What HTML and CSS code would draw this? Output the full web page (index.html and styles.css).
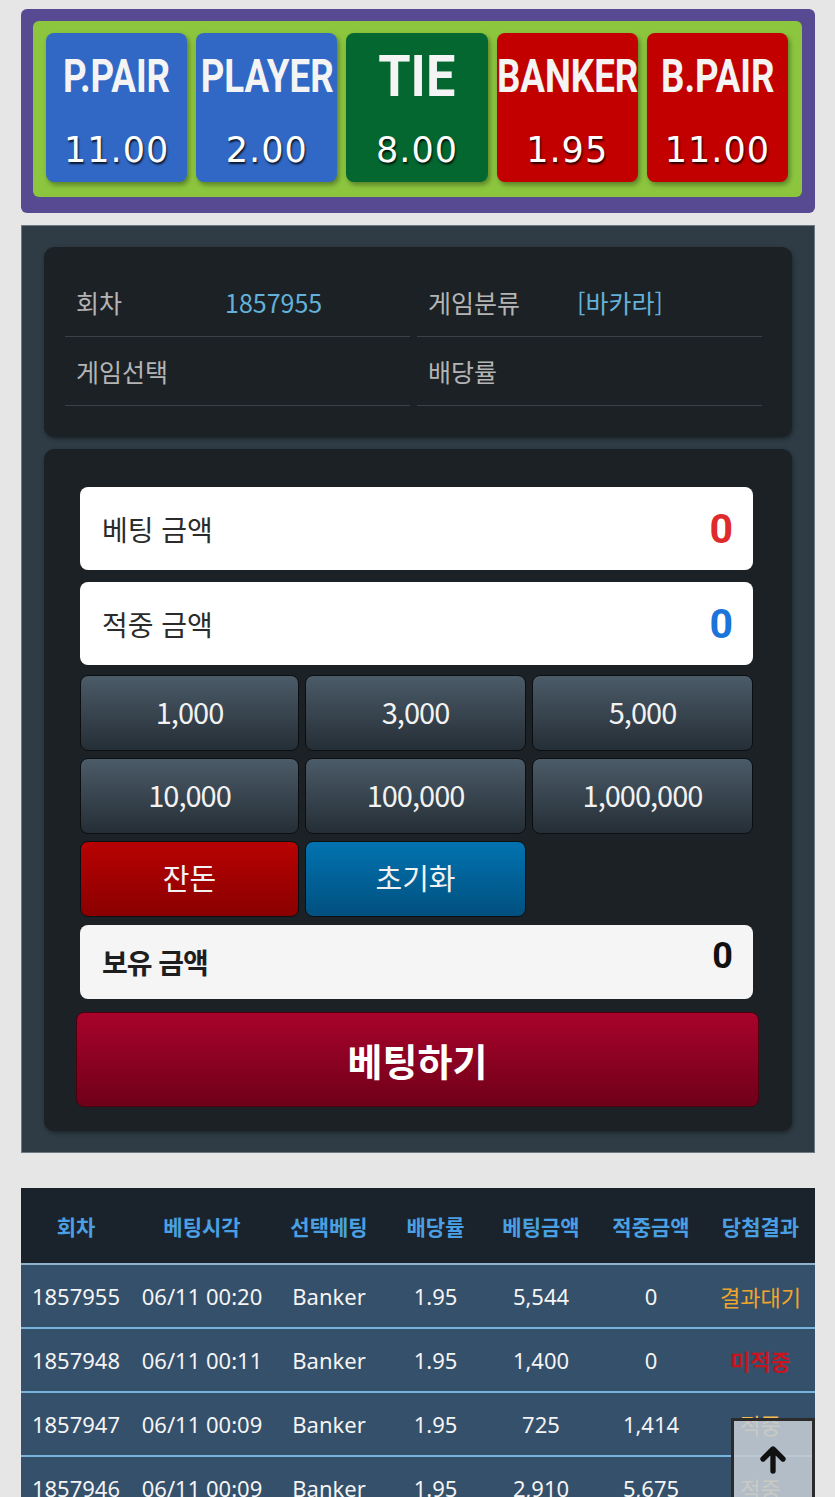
FILE: index.html
```html
<!DOCTYPE html>
<html lang="ko">
  <head>
    <meta charset="UTF-8" />
    <meta name="viewport" content="width=device-width, initial-scale=1.0" />
    <title>바카라 베팅</title>
    <link rel="stylesheet" href="styles.css">
  </head>
  <body>
    <div class="page">
      <div class="odds-box">
        <div class="odds-inner">
          <div class="odds odds-blue">
            <span class="odds-name">P.PAIR</span>
            <span class="odds-rate">11.00</span>
          </div>
          <div class="odds odds-blue">
            <span class="odds-name">PLAYER</span>
            <span class="odds-rate">2.00</span>
          </div>
          <div class="odds odds-green">
            <span class="odds-name">TIE</span>
            <span class="odds-rate">8.00</span>
          </div>
          <div class="odds odds-red">
            <span class="odds-name">BANKER</span>
            <span class="odds-rate">1.95</span>
          </div>
          <div class="odds odds-red">
            <span class="odds-name">B.PAIR</span>
            <span class="odds-rate">11.00</span>
          </div>
        </div>
      </div>

      <div class="bet-panel">
        <div class="info-card">
          <div class="info-grid">
            <div class="info-cell">
              <span class="info-label">회차</span>
              <span class="info-value">1857955</span>
            </div>
            <div class="info-cell">
              <span class="info-label">게임분류</span>
              <span class="info-value">[바카라]</span>
            </div>
            <div class="info-cell">
              <span class="info-label">게임선택</span>
              <span class="info-value"></span>
            </div>
            <div class="info-cell">
              <span class="info-label">배당률</span>
              <span class="info-value"></span>
            </div>
          </div>
        </div>

        <div class="form-card">
          <div class="amount-box">
            <span class="amount-label">베팅 금액</span>
            <span class="amount-value amount-red">0</span>
          </div>
          <div class="amount-box">
            <span class="amount-label">적중 금액</span>
            <span class="amount-value amount-blue">0</span>
          </div>

          <div class="chip-grid">
            <button class="chip">1,000</button>
            <button class="chip">3,000</button>
            <button class="chip">5,000</button>
            <button class="chip">10,000</button>
            <button class="chip">100,000</button>
            <button class="chip">1,000,000</button>
            <button class="chip chip-red">잔돈</button>
            <button class="chip chip-blue">초기화</button>
          </div>

          <div class="hold-box">
            <span class="hold-label">보유 금액</span>
            <span class="hold-value">0</span>
          </div>

          <button class="bet-btn">베팅하기</button>
        </div>
      </div>

      <table class="history">
        <colgroup>
          <col class="c-round" />
          <col class="c-time" />
          <col class="c-pick" />
          <col class="c-rate" />
          <col class="c-bet" />
          <col class="c-win" />
          <col class="c-result" />
        </colgroup>
        <thead>
          <tr>
            <th>회차</th>
            <th>베팅시각</th>
            <th>선택베팅</th>
            <th>배당률</th>
            <th>베팅금액</th>
            <th>적중금액</th>
            <th>당첨결과</th>
          </tr>
        </thead>
        <tbody>
          <tr>
            <td>1857955</td>
            <td>06/11 00:20</td>
            <td>Banker</td>
            <td>1.95</td>
            <td>5,544</td>
            <td>0</td>
            <td class="res-wait">결과대기</td>
          </tr>
          <tr>
            <td>1857948</td>
            <td>06/11 00:11</td>
            <td>Banker</td>
            <td>1.95</td>
            <td>1,400</td>
            <td>0</td>
            <td class="res-lose">미적중</td>
          </tr>
          <tr>
            <td>1857947</td>
            <td>06/11 00:09</td>
            <td>Banker</td>
            <td>1.95</td>
            <td>725</td>
            <td>1,414</td>
            <td class="res-win">적중</td>
          </tr>
          <tr>
            <td>1857946</td>
            <td>06/11 00:09</td>
            <td>Banker</td>
            <td>1.95</td>
            <td>2,910</td>
            <td>5,675</td>
            <td class="res-win">적중</td>
          </tr>
        </tbody>
      </table>
    </div>

    <a class="top-btn" href="#">
      <svg width="32" height="32" viewBox="0 0 24 24">
        <path d="M12 21V5M4.5 12L12 4.5 19.5 12" fill="none" stroke="#111" stroke-width="4" stroke-linecap="round" stroke-linejoin="round" />
      </svg>
    </a>
  </body>
</html>
```

FILE: styles.css
```css
body {
  margin: 0;
  background-color: #e6e6e6;
  font-family: "Noto Sans", "Noto Sans CJK KR", sans-serif;
}
.page {
  padding: 9px 20px 0 21px;
}

/* 배당 버튼 */
.odds-box {
  background-color: #574a92;
  border-radius: 6px;
  padding: 12px 13px 16px 12px;
}
.odds-inner {
  display: grid;
  grid-template-columns: repeat(5, minmax(0, 1fr));
  gap: 9px;
  background-color: #8cc63e;
  border-radius: 6px;
  padding: 12px 14px 15px 13px;
}
.odds {
  min-width: 0;
  height: 149px;
  border-radius: 8px;
  box-shadow: 2px 3px 5px rgba(0, 0, 0, 0.35);
  display: flex;
  flex-direction: column;
  align-items: center;
  color: #f4f4f4;
}
.odds-blue {
  background-color: #3168c5;
}
.odds-green {
  background-color: #03672f;
}
.odds-red {
  background-color: #c20000;
}
.odds-name {
  font-family: Roboto, "Noto Sans", sans-serif;
  font-weight: 700;
  font-size: 47px;
  line-height: 1;
  margin-top: 19px;
  transform: scaleX(0.78);
  white-space: nowrap;
}
.odds-green .odds-name {
  font-size: 58px;
  margin-top: 14px;
  transform: scaleX(0.9);
}
.odds-rate {
  font-family: "DejaVu Sans", sans-serif;
  font-size: 35px;
  line-height: 1;
  letter-spacing: 1px;
  margin-top: auto;
  margin-bottom: 14px;
  color: #ffffff;
  text-shadow: 1px 2px 2px rgba(0, 0, 0, 0.8);
}

/* 베팅 패널 */
.bet-panel {
  margin-top: 12px;
  background-color: #2f3c45;
  border: 1px solid #6b7a85;
  padding: 21px 22px 21px 22px;
}
.info-card,
.form-card {
  background-color: #1b2125;
  border-radius: 10px;
  box-shadow: 1px 2px 4px rgba(0, 0, 0, 0.4);
}
.info-card {
  padding: 21px 30px 31px 21px;
}
.info-grid {
  display: grid;
  grid-template-columns: 1fr 1fr;
  column-gap: 7px;
}
.info-cell {
  display: flex;
  align-items: center;
  height: 68px;
  padding-left: 11px;
  border-bottom: 1px solid #3a4247;
  font-family: "Noto Sans CJK KR", sans-serif;
  font-size: 25px;
}
.info-label {
  width: 149px;
  color: #b4b4b4;
}
.info-value {
  color: #63b1d9;
}

.form-card {
  margin-top: 12px;
  padding: 38px 39px 24px 36px;
}
.amount-box,
.hold-box {
  display: flex;
  align-items: center;
  justify-content: space-between;
  border-radius: 8px;
  padding: 0 20px 0 22px;
}
.amount-box {
  height: 83px;
  background-color: #ffffff;
  margin-bottom: 12px;
}
.amount-label,
.hold-label {
  font-family: "Noto Sans CJK KR", sans-serif;
  font-size: 28px;
  color: #2b2b2b;
}
.amount-value,
.hold-value {
  font-family: Roboto, sans-serif;
  font-weight: 700;
  font-size: 41px;
}
.amount-red {
  color: #e02b2b;
}
.amount-blue {
  color: #1b74d8;
}

.chip-grid {
  display: grid;
  grid-template-columns: 219px 1fr 1fr;
  grid-auto-rows: 76px;
  gap: 7px 6px;
  margin-top: -2px;
}
.chip {
  border: 1px solid #0c0f11;
  border-radius: 8px;
  background: linear-gradient(#4b5b68, #252e36);
  color: #f2f2f2;
  font-family: "Noto Sans CJK KR", sans-serif;
  font-size: 29px;
  letter-spacing: -1px;
  padding: 0 0 4px;
  cursor: pointer;
}
.chip-red {
  background: linear-gradient(#b80202, #8a0000);
  letter-spacing: 0;
}
.chip-blue {
  background: linear-gradient(#0273b0, #01507f);
  letter-spacing: 0;
}

.hold-box {
  height: 74px;
  background-color: #f5f5f5;
  margin-top: 8px;
}
.hold-label {
  font-weight: 700;
  color: #1e1e1e;
  letter-spacing: -1px;
}
.hold-value {
  font-size: 36px;
  color: #111;
  margin-bottom: 12px;
}

.bet-btn {
  display: block;
  width: calc(100% + 10px);
  height: 95px;
  margin: 13px 0 0 -4px;
  border: 1px solid #4c0010;
  border-radius: 8px;
  background: linear-gradient(#a8032b, #6f0019);
  color: #ffffff;
  font-family: "Noto Sans CJK KR", sans-serif;
  font-weight: 700;
  font-size: 38px;
  cursor: pointer;
}

/* 베팅 내역 */
.history {
  width: 100%;
  margin-top: 35px;
  border-collapse: collapse;
  table-layout: fixed;
}
.c-round { width: 110px; }
.c-time { width: 142px; }
.c-pick { width: 112px; }
.c-rate { width: 101px; }
.c-bet { width: 110px; }
.c-win { width: 110px; }
.c-result { width: 109px; }
.history th {
  height: 75px;
  background-color: #1a232b;
  border-bottom: 2px solid #8fb1c9;
  color: #4aa0e2;
  font-family: "Noto Sans CJK KR", sans-serif;
  font-weight: 700;
  font-size: 21px;
  padding: 0;
}
.history td {
  height: 62px;
  background-color: #34506a;
  border-bottom: 2px solid #78b3db;
  color: #f4f4f4;
  font-size: 22px;
  text-align: center;
  white-space: nowrap;
  padding: 0;
}
.history td.res-wait {
  color: #f1a52a;
  font-family: "Noto Sans CJK KR", sans-serif;
}
.history td.res-lose {
  color: #c8141f;
  font-family: "Noto Sans CJK KR", sans-serif;
  font-weight: 700;
}
.history td.res-win {
  color: #f6bb53;
  font-family: "Noto Sans CJK KR", sans-serif;
}

.top-btn {
  position: fixed;
  right: 20px;
  bottom: -12px;
  width: 84px;
  height: 91px;
  border: 3px solid #2b2b2b;
  background-color: rgba(196, 204, 212, 0.88);
  display: flex;
  justify-content: center;
  padding-top: 22px;
  box-sizing: border-box;
}
```
